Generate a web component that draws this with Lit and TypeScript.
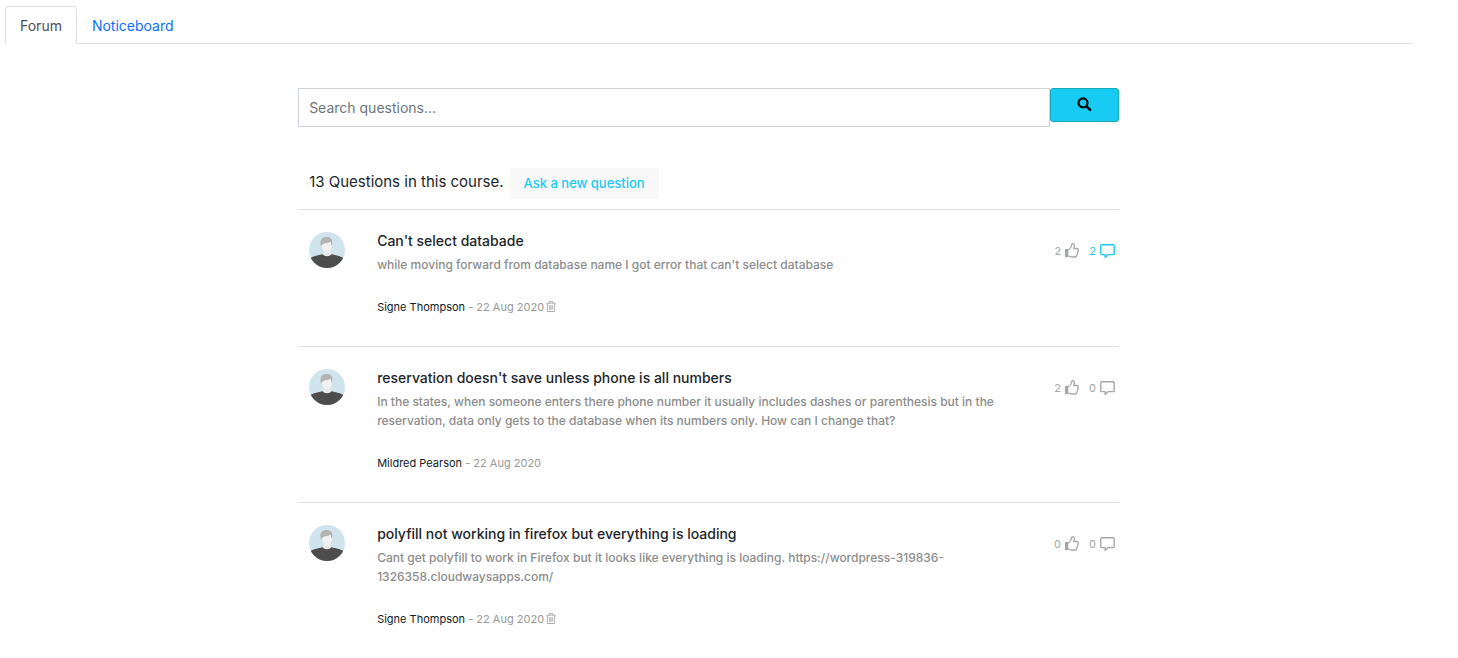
import { LitElement, html, css, svg, nothing } from "lit";
import { customElement, property, state } from "lit/decorators.js";

interface Question {
  title: string;
  body: string;
  author: string;
  date: string;
  likes: number;
  comments: number;
  own: boolean;
}

const QUESTIONS: Question[] = [
  {
    title: "Can't select databade",
    body: "while moving forward from database name I got error that can't select database",
    author: "Signe Thompson",
    date: "22 Aug 2020",
    likes: 2,
    comments: 2,
    own: true,
  },
  {
    title: "reservation doesn't save unless phone is all numbers",
    body: "In the states, when someone enters there phone number it usually includes dashes or parenthesis but in the reservation, data only gets to the database when its numbers only. How can I change that?",
    author: "Mildred Pearson",
    date: "22 Aug 2020",
    likes: 2,
    comments: 0,
    own: false,
  },
  {
    title: "polyfill not working in firefox but everything is loading",
    body: "Cant get polyfill to work in Firefox but it looks like everything is loading. https://wordpress-319836-1326358.cloudwaysapps.com/",
    author: "Signe Thompson",
    date: "22 Aug 2020",
    likes: 0,
    comments: 0,
    own: true,
  },
];

const searchIcon = html`<svg width="16" height="16" viewBox="0 0 16 16" aria-hidden="true">
  <circle cx="7" cy="5.900" r="4.500" fill="none" stroke="currentColor" stroke-width="2.1" />
  <path d="M10.500 9.300l3.600 3.600" stroke="currentColor" stroke-width="2.6" stroke-linecap="round" />
</svg>`;

const thumbIcon = html`<svg width="14" height="16" viewBox="0 0 14 16" aria-hidden="true">
  <path d="M0 6h3.300v8.200H0z" fill="currentColor" />
  <path
    d="M3.300 7C4.900 6 6.200 4.300 6.500 2.500 6.600 1.300 7 .7 7.700.7c1.200 0 1.700 1.100 1.600 2.400-.1.900-.4 1.700-.7 2.400h3.200c1 0 1.600.7 1.500 1.500 0 .6-.3 1-.6 1.300.3.800.1 1.600-.4 2.100.1.800-.1 1.400-.6 1.800 0 1.200-.7 1.800-1.900 1.800H7.100c-1.500 0-2.400-.6-3.800-1"
    fill="none" stroke="currentColor" stroke-width="1.300" stroke-linejoin="round" />
</svg>`;

const commentIcon = html`<svg width="15" height="15" viewBox="0 0 15 15" aria-hidden="true">
  <path d="M1.700 .8h11.600q.9 0 .9.900v8q0 .9-.9.900H8.300L5.200 13.500v-2.900H1.700q-.9 0-.9-.9V1.700q0-.9.900-.9z"
    fill="none" stroke="currentColor" stroke-width="1.400" stroke-linejoin="round" />
</svg>`;

const trashIcon = html`<svg width="10" height="12" viewBox="0 0 10 12" aria-hidden="true">
  <path d="M0.300 2.200h9.400M3.300 2V.700h3.400V2M1.400 2.400v8.100h7.200V2.400M3.700 4.200v4.600M5 4.200v4.600M6.300 4.200v4.600"
    fill="none" stroke="currentColor" stroke-width="0.9" />
</svg>`;

@customElement("user-avatar")
class UserAvatar extends LitElement {
  static styles = css`
    :host { display: block; width: 36px; height: 36px; }
    .disc { display: block; width: 100%; height: 100%; border-radius: 50%; }
  `;

  render() {
    return html`<svg class="disc" viewBox="0 0 36 36" aria-hidden="true">
      ${svg`
        <rect width="36" height="36" fill="#d0e4ee" />
        <path d="M14.300 17h7.400v6.500L18 26.500l-3.700-3z" fill="#e9e9e9" />
        <path d="M0 36V27.500c1.500-2.500 8-4 13.500-5.200 1.700 2.600 7.300 2.600 9 0 5.500 1.200 12 2.700 13.500 5.200V36z" fill="#4d4d4d" />
        <ellipse cx="17.900" cy="13.500" rx="4.900" ry="6.800" fill="#f1f1f1" />
        <path d="M12.100 14.700c-2-5.200.2-9.200 4.700-9.600 4.300-.5 7 2 6.500 6.200l-.5 2.800c-.6-1.400-.9-2.900-1-4.300-2.900 1.300-5.300 1-7.400 2.200-1.200.6-1.500 1.500-2.300 2.700z" fill="#b3b3b3" />
      `}
    </svg>`;
  }
}

@customElement("question-row")
class QuestionRow extends LitElement {
  @property({ attribute: false }) question!: Question;

  static styles = css`
    :host {
      display: grid;
      grid-template-columns: 36px minmax(0, 1fr) auto;
      padding: 22px 4px 31px 11px;
      border-top: 1px solid #dee2e6;
    }
    .text { padding: 0 32px; }
    .title { margin: 0 0 5px; font-size: 14px; line-height: 18px; font-weight: 500; color: #212529; }
    .body { max-width: 640px; margin: 0 0 25px; font-size: 12px; line-height: 19px; font-weight: 500; color: #8c8c8c; }
    .meta { display: flex; align-items: center; gap: 2px; margin: 0; font-size: 11px; line-height: 16px; color: #999; }
    .author { color: #10201f; text-decoration: none; }
    .counts { display: flex; align-items: center; gap: 10px; height: 16px; margin-top: 11px; }
    .icon { display: inline-flex; align-items: center; gap: 4px; padding: 0; border: 0; background: none; font: inherit; font-size: 11px; line-height: 16px; color: #a6a6a6; cursor: pointer; }
    .answered { color: #17cbf2; }
  `;

  render() {
    const q = this.question;
    return html`
      <user-avatar></user-avatar>
      <div class="text">
        <h2 class="title">${q.title}</h2>
        <p class="body">${q.body}</p>
        <p class="meta">
          <span><a class="author" href="#">${q.author}</a> - ${q.date}</span>
          ${q.own ? html`<button class="icon" type="button" aria-label="Delete question">${trashIcon}</button>` : nothing}
        </p>
      </div>
      <div class="counts">
        <button class="icon" type="button" aria-label="Like, ${q.likes}">${q.likes}${thumbIcon}</button>
        <button class="icon ${q.comments ? "answered" : ""}" type="button" aria-label="Comments, ${q.comments}">${q.comments}${commentIcon}</button>
      </div>
    `;
  }
}

@customElement("app-root")
class AppRoot extends LitElement {
  @state() private tab = "Forum";

  static styles = css`
    :host {
      display: block;
      padding: 6px 46px 0 5px;
      background: #fff;
      color: #212529;
      font-family: Inter, "Open Sans", sans-serif;
    }
    .tabs { display: flex; border-bottom: 1px solid #dee2e6; }
    .tab { margin-bottom: -1px; padding: 9px 14px 7px; border: 1px solid transparent; border-radius: 4px 4px 0 0; background: none; font: inherit; font-size: 14px; line-height: 20px; color: #0d6efd; cursor: pointer; }
    .tab[aria-selected="true"] { border-color: #dee2e6 #dee2e6 #fff; background: #fff; color: #495057; }
    .forum { width: 58.33%; margin: 44px auto 0; }
    .search { display: flex; align-items: flex-start; }
    .field { flex: 1; min-width: 0; box-sizing: border-box; height: 39px; padding: 0 10px; border: 1px solid #ced4da; border-radius: 0; font: inherit; font-size: 14px; color: #212529; }
    .field::placeholder { color: #6c757d; opacity: 1; }
    .submit { display: flex; align-items: center; justify-content: center; box-sizing: border-box; width: 69px; height: 34px; padding: 0; border: 1px solid #18a9b8; border-radius: 3px; background: #17cbf2; color: #000; cursor: pointer; }
    .summary { display: flex; align-items: flex-start; gap: 6px; padding: 41px 11px 10px; }
    .total { margin: 0; font-size: 15px; line-height: 28px; font-weight: 400; }
    .ask { padding: 6px 14px; border: 0; background: #f9f9fa; font: inherit; font-size: 13px; line-height: 19px; font-weight: 500; color: #17cbf2; cursor: pointer; }
  `;

  render() {
    return html`
      <div class="tabs" role="tablist">
        ${["Forum", "Noticeboard"].map(
          (name) => html`<button class="tab" type="button" role="tab" aria-selected=${this.tab === name ? "true" : "false"} @click=${() => (this.tab = name)}>${name}</button>`
        )}
      </div>
      <main class="forum">
        <form class="search" @submit=${(e: Event) => e.preventDefault()}>
          <input class="field" type="text" aria-label="Search questions" placeholder="Search questions..." />
          <button class="submit" type="submit" aria-label="Search">${searchIcon}</button>
        </form>
        <div class="summary">
          <h1 class="total">13 Questions in this course.</h1>
          <button class="ask" type="button">Ask a new question</button>
        </div>
        ${QUESTIONS.map((q) => html`<question-row .question=${q}></question-row>`)}
      </main>
    `;
  }
}
